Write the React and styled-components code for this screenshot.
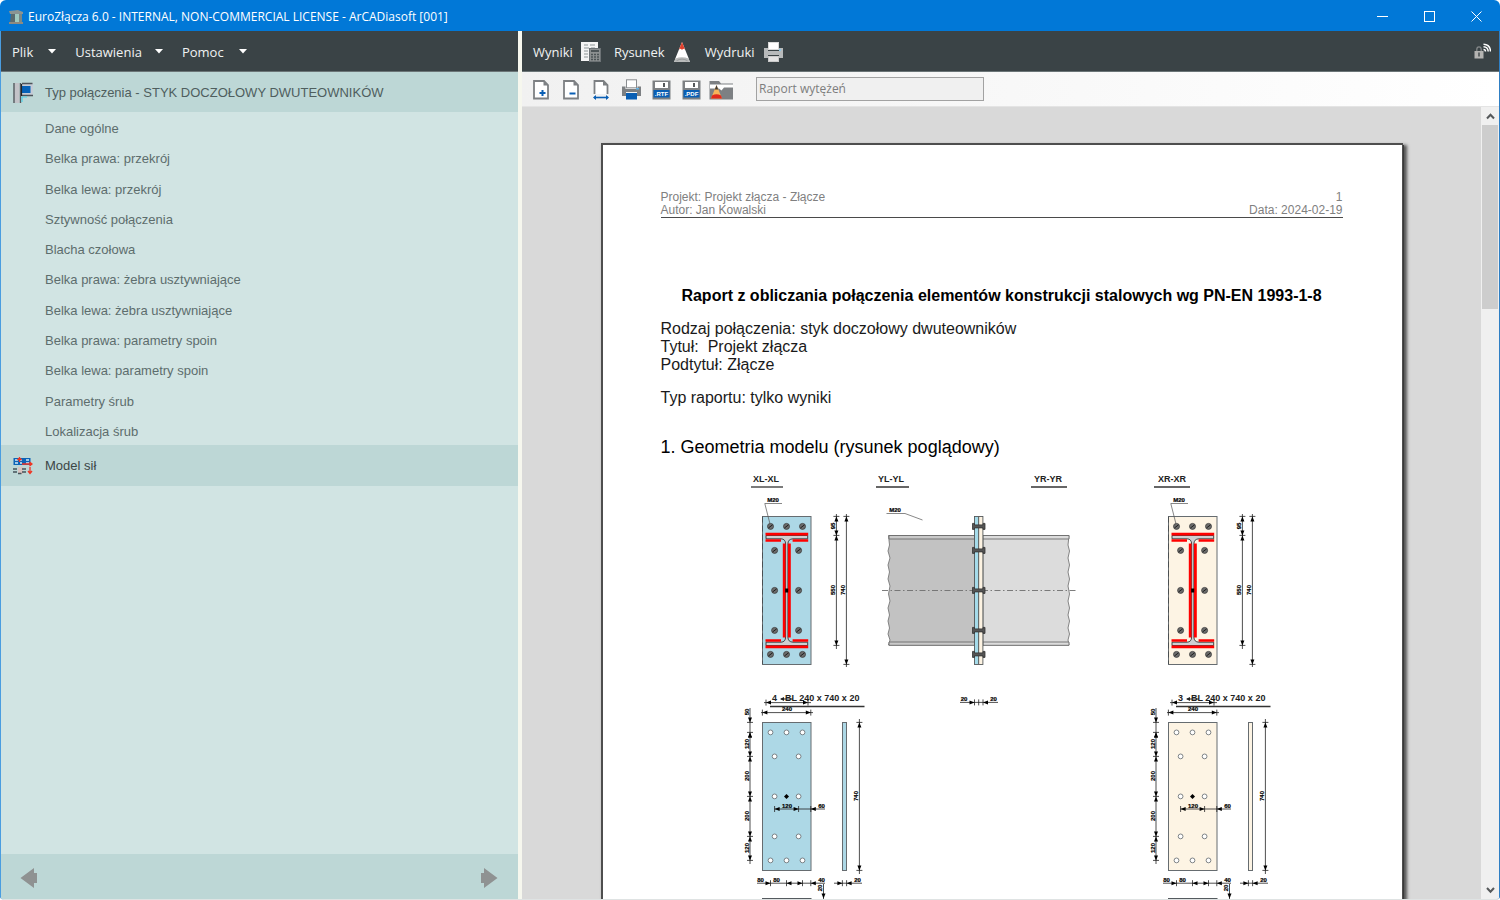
import React from "react";
import styled, { createGlobalStyle } from "styled-components";

const UI = '"Open Sans", "Noto Sans", sans-serif';
const ARIAL = '"Liberation Sans", Arial, sans-serif';

const Global = createGlobalStyle`
  *, *::before, *::after { box-sizing: border-box; }
  html, body, #root { height: 100%; }
  body { margin: 0; background: #ffffff; overflow: hidden; }
  button { border: 0; padding: 0; margin: 0; background: none; color: inherit; font: inherit; }
  svg { display: block; flex: none; }
`;

const Window = styled.div`
  height: 100vh;
  display: flex;
  flex-direction: column;
  overflow: hidden;
  border-radius: 6px 6px 4px 4px;
  border-bottom: 1px solid #dfe3e3;
  background: #0178d7;
`;

const TitleBar = styled.header`
  height: 31px;
  flex: none;
  display: flex;
  align-items: center;
  padding: 2px 0 0 8px;
  color: #ffffff;
  font: 12px/16px ${UI};
`;

const WindowTitle = styled.h1`
  margin: 0 0 0 4px;
  flex: 1;
  font: inherit;
  white-space: nowrap;
`;

const WindowButton = styled.button`
  width: 47px;
  height: 28px;
  display: grid;
  place-items: center;
`;

const Body = styled.div`
  flex: 1;
  min-height: 0;
  display: grid;
  grid-template-columns: minmax(0, 517fr) 4px minmax(0, 977fr);
  padding: 0 1px;
  background: linear-gradient(90deg, #4a9de0 50%, #2f7fc4 50%);
`;

const Divider = styled.div`
  background: #f6f7ee;
`;

const SidePanel = styled.aside`
  display: flex;
  flex-direction: column;
  min-height: 0;
  background: #d1e4e3;
`;

const MenuBar = styled.nav`
  height: 41px;
  flex: none;
  display: flex;
  align-items: center;
  padding: 1px 8px 0 11px;
  background: #3a4346;
  border-bottom: 1px solid #6b7577;
  color: #f0f2f2;
  font: 13px/18px ${UI};
`;

const MenuButton = styled.button`
  display: flex;
  align-items: center;
  gap: ${(p) => p.$gap}px;
  margin-right: ${(p) => p.$after}px;
`;

const MenuSpacer = styled.div`
  flex: 1;
`;

const SectionButton = styled.button`
  height: ${(p) => p.$height}px;
  flex: none;
  display: flex;
  align-items: center;
  gap: 12px;
  padding: 1px 0 0 12px;
  background: #bdd7d6;
  color: ${(p) => p.$color};
  font: 13px/18px ${ARIAL};
  text-align: left;
`;

const StepList = styled.ul`
  height: 333px;
  flex: none;
  margin: 0;
  padding: 0 0 0 44px;
  list-style: none;
  display: grid;
  grid-auto-rows: 1fr;
`;

const StepItem = styled.li`
  display: flex;
  align-items: center;
  padding-top: 4px;
`;

const StepLink = styled.a`
  color: #5d6d6d;
  text-decoration: none;
  font: 13px/18px ${ARIAL};
`;

const PagerBar = styled.footer`
  height: 45px;
  flex: none;
  margin-top: auto;
  display: flex;
  align-items: center;
  justify-content: space-between;
  padding: 2px 20px 0 19px;
  background: #bdd7d6;
`;

const PagerButton = styled.button`
  display: grid;
  place-items: center;
`;

const MainPanel = styled.main`
  display: flex;
  flex-direction: column;
  min-width: 0;
  min-height: 0;
`;

const ToolBar = styled.div`
  height: 35px;
  flex: none;
  display: flex;
  align-items: center;
  padding-left: 4px;
  background: linear-gradient(90deg, #f1f1f1, #ffffff);
  border-bottom: 1px solid #e4e4e4;
`;

const ToolButton = styled.button`
  width: 30px;
  height: 26px;
  flex: none;
  display: grid;
  justify-content: center;
  align-content: center;
  padding-top: 1px;
`;

const ReportName = styled.input`
  width: 228px;
  height: 24px;
  margin-left: 20px;
  padding: 0 2px 2px;
  border: 1px solid #a2a2a2;
  border-radius: 0;
  background: #f0f0f0;
  color: #7d7d7d;
  font: 12px/16px ${UI};
`;

const Viewer = styled.div`
  flex: 1;
  min-height: 0;
  display: flex;
  background: #d9d9d9;
`;

const PageArea = styled.div`
  flex: 1;
  min-width: 0;
  padding-top: 36px;
  overflow: hidden;
`;

const Paper = styled.article`
  width: 802px;
  max-width: 100%;
  margin: 0 auto;
  padding: 46px 59px 60px 58px;
  background: #ffffff;
  border: 2px solid #4e4e4e;
  border-width: 2px 1px 2px 2px;
  box-shadow: 1px 2px 0 #3a3a3a, 3px 3px 3px 1px #555555;
  color: #1a1a1a;
  font: 16px/18px ${ARIAL};
`;

const PaperHeader = styled.header`
  display: flex;
  justify-content: space-between;
  border-bottom: 1px solid #4a4a4a;
  color: #808080;
  font: 12px/13px ${ARIAL};
`;

const HeaderBlock = styled.div`
  text-align: ${(p) => (p.$end ? "right" : "left")};
`;

const ReportTitle = styled.h2`
  margin: 69px 0 15px;
  color: #000000;
  font: bold 16px/18px ${ARIAL};
  text-align: center;
  white-space: nowrap;
`;

const ReportText = styled.p`
  margin: 0 0 15px;
  white-space: pre-wrap;
`;

const ReportHeading = styled.h3`
  margin: 29px 0 8px;
  color: #000000;
  font: 18px/22px ${ARIAL};
`;

const Drawing = styled.svg`
  width: 100%;
  height: auto;
  font-family: ${ARIAL};
  font-weight: bold;
`;

const ScrollBar = styled.div`
  width: 18px;
  flex: none;
  display: flex;
  flex-direction: column;
  padding: 0 1px;
  background: #f0f0f0;
`;

const ScrollButton = styled.button`
  height: 18px;
  flex: none;
  display: grid;
  place-items: center;
`;

const ScrollTrack = styled.div`
  flex: 1;
`;

const ScrollThumb = styled.div`
  height: 24.4%;
  background: #cdcdcd;
`;

/* ---------- icons ---------- */

const AppIcon = () => (
  <svg width="16" height="16" viewBox="0 0 16 16">
    <path d="M1 2 L10 1 L15 3 V5 H2 Z" fill="#8b9492" />
    <path d="M3 5 H7 V14 H2 Z" fill="#5a6b6f" />
    <path d="M7 5 H11 V14 H7 Z" fill="#9fc9bf" />
    <path d="M11 5 H14 V14 H11 Z" fill="#7a8784" />
    <path d="M1 13 H15 V15 H1 Z" fill="#8d8a80" />
  </svg>
);

const Caret = () => (
  <svg width="8" height="5" viewBox="0 0 8 5">
    <path d="M0 0 H8 L4 4.5 Z" fill="#ffffff" />
  </svg>
);

const ResultsIcon = () => (
  <svg width="20" height="20" viewBox="0 0 20 20">
    <rect x="0" y="0" width="17" height="19" fill="#f4f4f4" />
    <path d="M3 3h4M9 3h5M3 6h5M10 6h4M3 9h4M3 12h4M3 15h4" stroke="#8c9496" strokeWidth="1.2" />
    <rect x="8.500" y="6.500" width="11" height="13" fill="#8c9091" stroke="#6c7275" />
    <rect x="10" y="8" width="8" height="2" fill="#4c5457" />
    <path d="M10 12.500h8M10 15h8M10 17.500h8" stroke="#4c5457" strokeWidth="1.400" strokeDasharray="2 1" />
  </svg>
);

const DrawingIcon = () => (
  <svg width="16" height="20" viewBox="0 0 16 20">
    <path d="M8 0 L14.500 16 L15.800 20 H0.200 L1.500 16 Z" fill="#ffffff" />
    <path d="M8 0 L11 7.500 L9.600 6.800 L8 7.800 L6.400 6.800 L5 7.500 Z" fill="#e0402c" />
    <path d="M1.300 16.500 Q8 14 14.700 16.500 L15.800 20 H0.200 Z" fill="#b9bbbb" />
    <path d="M2.500 18.700 Q8 15.500 13.500 18.700" fill="none" stroke="#8e9292" strokeWidth="0.800" />
  </svg>
);

const PrintIcon = () => (
  <svg width="20" height="20" viewBox="0 0 20 20">
    <rect x="4.500" y="0.500" width="10" height="7" fill="#ffffff" stroke="#dadada" />
    <path d="M0 6 H4 V9 H15 V6 H19 V16 H15 V13 H4 V16 H0 Z" fill="#b7babb" />
    <rect x="4.500" y="14.500" width="10" height="5" fill="#e3e3e3" stroke="#c9c9c9" />
    <rect x="15" y="7" width="2" height="2" fill="#8cc7e6" />
  </svg>
);

const LockIcon = () => (
  <svg width="17" height="17" viewBox="0 0 17 17">
    <path d="M2.800 9 V6.500 Q2.800 3.800 5 3.800 Q7.200 3.800 7.200 6.500 V9" fill="none" stroke="#85898a" strokeWidth="1.300" />
    <rect x="0.500" y="8" width="9" height="7.500" fill="#b4b4b2" />
    <path d="M5 9.500 V13.500" stroke="#4d5355" strokeWidth="1.600" />
    <path d="M9.500 6.500 Q11.500 6.500 11.500 8.500 M9.500 3.800 Q14 4 14.200 8.500 M9.500 1.200 Q16.300 1.500 16.500 8.500" fill="none" stroke="#ffffff" strokeWidth="1.500" />
  </svg>
);

const JointIcon = () => (
  <svg width="20" height="22" viewBox="0 0 20 22">
    <rect x="1.500" y="1" width="5" height="20" fill="#c3c3c8" />
    <path d="M1 1 V21 M7.500 1 V21" stroke="#53575c" strokeWidth="1.400" />
    <rect x="9" y="1" width="11" height="12" fill="#c5cbd6" />
    <path d="M9 1.500 H19.500 M9 13.500 H20" stroke="#4e545a" strokeWidth="1.400" />
    <rect x="8.500" y="4" width="9" height="7" fill="#0562b8" />
    <path d="M8.500 2 V14" stroke="#202428" strokeWidth="1.200" />
    <path d="M9 15 H14 M9 15 V20" stroke="#4fd3ea" strokeWidth="1.200" />
  </svg>
);

const ForcesIcon = () => (
  <svg width="20" height="18" viewBox="0 0 20 18">
    <rect x="0.500" y="1" width="17" height="7" fill="#0c63b6" />
    <path d="M2 3 H5 M7 3 H9 M13 3 H16 M2 6 H5 M7 6 H9 M13 6 H16" stroke="#cfeaf7" strokeWidth="1.400" />
    <rect x="5" y="10" width="5" height="7" fill="#d9c3c0" />
    <path d="M0 12 H4 M0 15 H4 M5 16.500 H8.500 M9 12 H13 M9 15 H13" stroke="#46535a" strokeWidth="1.400" />
    <path d="M6.500 0 V5 M4.500 3 L6.500 1 L8.500 3 M9 7 H18 M16.500 5 L19 7 L16.500 9 M17 10 V16 M15 14 L17 16.500 L19 14" fill="none" stroke="#ee3524" strokeWidth="1.300" />
  </svg>
);

const ArrowIcon = ({ back }) => (
  <svg width="18" height="22" viewBox="0 0 18 22">
    <path
      d={back ? "M0.500 11 L14 1 V6 H17 V16 H14 V21 Z" : "M17.500 11 L4 1 V6 H1 V16 H4 V21 Z"}
      fill="#8f9292"
    />
  </svg>
);

const PageShape = () => (
  <path d="M1 1 H11 L15 5 V18.500 H1 Z" fill="#ffffff" stroke="#7d8083" strokeWidth="1.800" />
);

const PageFold = () => <path d="M10.500 1 V5.500 H15 Z" fill="#7d8083" />;

const PagePlusIcon = () => (
  <svg width="16" height="20" viewBox="0 0 16 20">
    <PageShape />
    <PageFold />
    <path d="M6.500 13 H12.500 M9.500 10 V16" stroke="#0a5fb4" strokeWidth="2" />
  </svg>
);

const PageMinusIcon = () => (
  <svg width="16" height="20" viewBox="0 0 16 20">
    <PageShape />
    <PageFold />
    <path d="M6.500 13.500 H12.500" stroke="#0a5fb4" strokeWidth="2" />
  </svg>
);

const PageWidthIcon = () => (
  <svg width="16" height="20" viewBox="0 0 16 20">
    <path d="M1.500 14 V1 H10.500 L14.500 5 V14" fill="#ffffff" stroke="#7d8083" strokeWidth="1.800" />
    <path d="M10 1 V5.500 H15 Z" fill="#7d8083" />
    <path d="M1 17.500 H15" stroke="#0a5fb4" strokeWidth="1.600" />
    <path d="M0 17.500 L3 15 V20 Z M16 17.500 L13 15 V20 Z" fill="#0a5fb4" />
  </svg>
);

const ToolPrintIcon = () => (
  <svg width="19" height="21" viewBox="0 0 19 21">
    <rect x="4.500" y="0.800" width="10" height="8" fill="#ffffff" stroke="#8a8d90" />
    <path d="M0 7.500 H3.500 V10 H15.500 V7.500 H19 V17 H15 V13 H4 V17 H0 Z" fill="#7d8083" />
    <rect x="4" y="14" width="11" height="6.500" fill="#0a5fb4" />
    <rect x="14" y="9" width="3" height="1.500" fill="#63b5e8" />
  </svg>
);

const DiskIcon = ({ label }) => (
  <svg width="19" height="20" viewBox="0 0 19 20">
    <path d="M0.500 0.500 H18.500 V19.500 H0.500 Z" fill="#7d8083" />
    <rect x="3" y="2" width="13" height="6" fill="#ffffff" />
    <rect x="11" y="3" width="2" height="4" fill="#55585a" />
    <rect x="1.500" y="10" width="16" height="7.500" fill="#0a5fb4" />
    <text x="9.500" y="16" textAnchor="middle" fontFamily="Liberation Sans" fontWeight="bold" fontSize="6" fill="#ffffff">
      {label}
    </text>
  </svg>
);

const FolderIcon = () => (
  <svg width="25" height="20" viewBox="0 0 25 20">
    <path d="M0.500 1 H10 L12 3.500 H24 V19.500 H0.500 Z" fill="#7d8083" />
    <path d="M1 4.500 H24 V7.500 H15 L12.500 10.500 L10 8.500 L1 8.500 Z" fill="#ffffff" />
    <path d="M7.500 5 L13 18.500 H2 Z" fill="#f6b45a" />
    <path d="M7.500 5 L9.200 9.500 H5.800 Z" fill="#3e3a36" />
    <path d="M3 15.500 Q7.500 13 12 15.500 L13 18.500 H2 Z" fill="#e02a1c" />
  </svg>
);

const Chevron = ({ down }) => (
  <svg width="9" height="7" viewBox="0 0 9 7">
    <path d={down ? "M1 1 L4.500 4.800 L8 1" : "M1 5.500 L4.500 1.700 L8 5.500"} fill="none" stroke="#55585a" strokeWidth="2" />
  </svg>
);

/* ---------- technical drawing ---------- */

const INK = "#222222";

const Head = ({ x, y, dir }) => {
  const angle = { up: 0, right: 90, down: 180, left: 270 }[dir];
  return <path d="M0 0 L2 5 H-2 Z" fill="#000000" transform={`translate(${x} ${y}) rotate(${angle})`} />;
};

const VDim = ({ x, from, to, ticks, gaps }) => (
  <g>
    <path
      d={`M${x} ${from} V${to} ` + ticks.map((t) => `M${x - 3} ${t} h6`).join(" ")}
      stroke={INK}
      strokeWidth="0.800"
      fill="none"
    />
    {gaps.map(([a, b]) => (
      <g key={a + "-" + b}>
        <Head x={x} y={a} dir="up" />
        <Head x={x} y={b} dir="down" />
      </g>
    ))}
  </g>
);

const HDim = ({ y, from, to, ticks, heads }) => (
  <g>
    <path
      d={`M${from} ${y} H${to} ` + ticks.map((t) => `M${t} ${y - 3} v6`).join(" ")}
      stroke={INK}
      strokeWidth="0.800"
      fill="none"
    />
    {heads.map(([x, dir]) => (
      <Head key={x + dir} x={x} y={y} dir={dir} />
    ))}
  </g>
);

const Dim = ({ x, y, turned, children }) => (
  <text
    fontSize="6"
    textAnchor="middle"
    fill="#000000"
    stroke="#000000"
    strokeWidth="0.200"
    transform={`translate(${x} ${y})${turned ? " rotate(-90)" : ""}`}
  >
    {children}
  </text>
);

const ViewLabel = ({ x, from, to, children }) => (
  <g>
    <text x={x} y="482" fontSize="9" textAnchor="middle" fill="#222222">
      {children}
    </text>
    <path d={`M${from} 487 H${to}`} stroke="#333333" strokeWidth="1.300" />
  </g>
);

const boltSpots = (y) => [
  [770.5, y], [786.5, y], [802.5, y],
  [774.6, y + 24], [798.6, y + 24],
  [774.6, y + 64], [798.6, y + 64],
  [774.6, y + 104], [798.6, y + 104],
  [770.5, y + 128], [786.5, y + 128], [802.5, y + 128],
];

const PlateViews = ({ shift, fill, count }) => (
  <g transform={`translate(${shift} 0)`}>
    <rect x="762.500" y="516.500" width="48.500" height="148" fill={fill} stroke="#666c70" />
    <path d="M762.500 516.500 V664" stroke="#4a4f52" strokeDasharray="6 3" />
    {boltSpots(526.4).map(([x, y]) => (
      <g key={`${x}-${y}`}>
        <circle cx={x} cy={y} r="3" fill="#6c6c6c" stroke="#3c3c3c" strokeWidth="0.800" />
        <path d={`M${x - 2} ${y + 1.5} L${x + 2} ${y - 1.5}`} stroke="#1e1e1e" strokeWidth="1" />
      </g>
    ))}
    <path
      d="M766 535.500 H807.700 V538.800 H793 Q787.900 539 787.900 544 V637 Q787.900 642 793 642.200 H807.700 V645.500 H766 V642.200 H781 Q785.600 642 785.600 637 V544 Q785.600 539 781 538.800 H766 Z"
      fill="#cfcfd2"
      stroke="#333333"
      strokeWidth="0.900"
    />
    <path d="M765.500 532.800 H808.200 V535.600 H765.500 Z M765.500 539.300 H781 V541.800 H765.500 Z M792.600 539.300 H808.200 V541.800 H792.600 Z" fill="#ff0000" />
    <path d="M765.500 645.400 H808.200 V648.200 H765.500 Z M765.500 639.200 H781 V641.700 H765.500 Z M792.600 639.200 H808.200 V641.700 H792.600 Z" fill="#ff0000" />
    <path d="M782.800 543.500 H785.500 V637.500 H782.800 Z M788 543.500 H790.800 V637.500 H788 Z" fill="#ff0000" />
    <rect x="785.200" y="588.500" width="3" height="4" fill="#000000" />

    <Dim x={773} y={502}>M20</Dim>
    <path d="M782 503.500 H764.800 L770 524" fill="none" stroke="#555555" strokeWidth="0.700" />

    <VDim x={836.4} from={514} to={649} ticks={[516.4, 535.4, 645.4]} gaps={[[516.4, 535.4], [535.4, 645.4]]} />
    <VDim x={846.4} from={514} to={667} ticks={[516.4, 664.4]} gaps={[[516.4, 664.4]]} />
    <Dim x={835} y={526} turned>95</Dim>
    <Dim x={835} y={590} turned>550</Dim>
    <Dim x={845} y={590} turned>740</Dim>

    <text x="772" y="701" fontSize="9" fill="#222222">{count}</text>
    <text x="785" y="701" fontSize="9" fill="#222222">BL 240 x 740 x 20</text>
    <path d="M770 706.500 H864.500" stroke="#333333" strokeWidth="1.300" />
    <path d="M781 699 H793" stroke={INK} strokeWidth="1" />
    <path d="M780 699 L784 697 V701 Z" fill={INK} />
    <HDim y={702.6} from={764} to={811} ticks={[766, 808]} heads={[[766, "left"], [808, "right"]]} />
    <HDim y={712.6} from={761} to={813} ticks={[762.4, 810.8]} heads={[[762.4, "left"], [810.8, "right"]]} />
    <Dim x={787} y={711}>240</Dim>

    <rect x="762.500" y="722.500" width="48.500" height="148" fill={fill} stroke="#666c70" />
    {boltSpots(732.4).map(([x, y]) => (
      <circle key={`${x}-${y}`} cx={x} cy={y} r="2.400" fill="#ffffff" stroke="#71767a" strokeWidth="0.900" />
    ))}
    <path d="M786.500 794 L789 796.400 L786.500 799 L784 796.400 Z" fill="#000000" />
    <HDim y={809} from={774.6} to={825} ticks={[774.6, 798.6, 810.8]} heads={[[774.6, "left"], [798.6, "right"], [810.8, "left"]]} />
    <Dim x={787} y={808}>120</Dim>
    <Dim x={821.5} y={808}>60</Dim>

    <VDim
      x={750}
      from={708}
      to={864}
      ticks={[722.4, 732.4, 756.4, 796.4, 836.4, 860.4]}
      gaps={[[732.4, 722.4], [732.4, 756.4], [756.4, 796.4], [796.4, 836.4], [836.4, 860.4]]}
    />
    <Dim x={748.5} y={712} turned>50</Dim>
    <Dim x={748.5} y={744} turned>120</Dim>
    <Dim x={748.5} y={776} turned>200</Dim>
    <Dim x={748.5} y={816} turned>200</Dim>
    <Dim x={748.5} y={848} turned>120</Dim>

    <rect x="842.500" y="722.500" width="4" height="148" fill={fill} stroke="#666c70" />
    <VDim x={859.4} from={719} to={874} ticks={[722.4, 870.4]} gaps={[[722.4, 870.4]]} />
    <Dim x={858} y={796} turned>740</Dim>

    <HDim
      y={883.2}
      from={757}
      to={825}
      ticks={[770.5, 786.5, 802.5, 810.8]}
      heads={[[770.5, "right"], [786.5, "left"], [802.5, "right"], [810.8, "left"]]}
    />
    <Dim x={760.5} y={882}>80</Dim>
    <Dim x={776.5} y={882}>80</Dim>
    <Dim x={821.5} y={882}>40</Dim>
    <HDim y={883.2} from={834} to={862} ticks={[842.4, 846.6]} heads={[[842.4, "right"], [846.6, "left"]]} />
    <Dim x={857.5} y={882}>20</Dim>
    <path d="M823.500 884 V900" stroke={INK} strokeWidth="0.800" />
    <Head x={823.5} y={898.5} dir="down" />
    <Dim x={822} y={888} turned>20</Dim>
    <rect x="762.500" y="898.500" width="48.500" height="4" fill={fill} stroke="#555b5f" />
  </g>
);

const SideView = () => (
  <g>
    <path d="M888.500 535.500 H974.500 V645 H888.500 L890 640 L888 634 L889.500 628 L888 621 L889.500 615 L888 608 L890 601 L888.500 594 L890 586 L888 579 L889.500 572 L888 565 L890 558 L888 551 L889.500 545 Z" fill="#c2c2c2" stroke="#777777" strokeWidth="0.900" />
    <path d="M983 535.500 H1069 L1068 545 L1069.500 551 L1068 558 L1069.500 565 L1068 572 L1069.500 579 L1068 586 L1069.500 594 L1068 601 L1069.500 608 L1068 615 L1069.500 621 L1068 628 L1069.500 634 L1068 640 L1069 645 H983 Z" fill="#dcdcdc" stroke="#777777" strokeWidth="0.900" />
    <path d="M889 535.500 H974.500 V539 H889 Z M889 642 H974.500 V645.300 H889 Z" fill="#c9c9c9" stroke="#6b6b6b" strokeWidth="0.900" />
    <path d="M983 535.500 H1069 V539 H983 Z M983 642 H1069 V645.300 H983 Z" fill="#dcdcdc" stroke="#6b6b6b" strokeWidth="0.900" />
    <path d="M882 590.500 H1076" stroke="#6e6e6e" strokeWidth="0.900" strokeDasharray="6 2.500 1.500 2.500" />
    <rect x="974.500" y="516.500" width="4.200" height="148" fill="#a5dbea" stroke="#55595b" strokeWidth="0.900" />
    <rect x="978.700" y="516.500" width="4.200" height="148" fill="#fdf3e2" stroke="#55595b" strokeWidth="0.900" />
    {[526.4, 550.4, 590.4, 630.4, 654.4].map((y) => (
      <path
        key={y}
        d={`M972.500 ${y - 3} h2 v1.500 h8.500 v-1.500 h2 v6 h-2 v-1.500 h-8.500 v1.500 h-2 Z`}
        fill="#555555"
        stroke="#333333"
        strokeWidth="0.800"
      />
    ))}
    <Dim x={895} y={512}>M20</Dim>
    <path d="M886.500 513.500 H905 L922.500 520" fill="none" stroke="#555555" strokeWidth="0.700" />
    <HDim y={702.4} from={960} to={998} ticks={[974.5, 978.7, 983]} heads={[[974.5, "right"], [983, "left"]]} />
    <Dim x={964} y={701}>20</Dim>
    <Dim x={993.5} y={701}>20</Dim>
  </g>
);

const JointDrawing = () => (
  <Drawing viewBox="661 466 682 440" role="img" aria-label="Geometria modelu">
    <ViewLabel x={766} from={751} to={783}>XL-XL</ViewLabel>
    <ViewLabel x={891} from={876} to={909}>YL-YL</ViewLabel>
    <ViewLabel x={1048} from={1031} to={1067}>YR-YR</ViewLabel>
    <ViewLabel x={1172} from={1154} to={1190}>XR-XR</ViewLabel>
    <PlateViews shift={0} fill="#add8e6" count="4" />
    <SideView />
    <PlateViews shift={406} fill="#fdf4e4" count="3" />
  </Drawing>
);

/* ---------- page ---------- */

const steps = [
  "Dane ogólne",
  "Belka prawa: przekrój",
  "Belka lewa: przekrój",
  "Sztywność połączenia",
  "Blacha czołowa",
  "Belka prawa: żebra usztywniające",
  "Belka lewa: żebra usztywniające",
  "Belka prawa: parametry spoin",
  "Belka lewa: parametry spoin",
  "Parametry śrub",
  "Lokalizacja śrub",
];

const tools = [
  ["Powiększ", <PagePlusIcon />],
  ["Pomniejsz", <PageMinusIcon />],
  ["Szerokość strony", <PageWidthIcon />],
  ["Drukuj", <ToolPrintIcon />],
  ["Zapisz RTF", <DiskIcon label=".RTF" />],
  ["Zapisz PDF", <DiskIcon label=".PDF" />],
  ["Otwórz rysunek", <FolderIcon />],
];

export default function App() {
  return (
    <Window>
      <Global />
      <TitleBar>
        <AppIcon />
        <WindowTitle>EuroZłącza 6.0 - INTERNAL, NON-COMMERCIAL LICENSE - ArCADiasoft [001]</WindowTitle>
        <WindowButton aria-label="Minimalizuj">
          <svg width="11" height="11"><path d="M0 5.500 H11" stroke="#ffffff" /></svg>
        </WindowButton>
        <WindowButton aria-label="Maksymalizuj">
          <svg width="11" height="11"><rect x="0.500" y="0.500" width="10" height="10" fill="none" stroke="#ffffff" /></svg>
        </WindowButton>
        <WindowButton aria-label="Zamknij">
          <svg width="11" height="11"><path d="M0.500 0.500 L10.500 10.500 M10.500 0.500 L0.500 10.500" stroke="#ffffff" /></svg>
        </WindowButton>
      </TitleBar>
      <Body>
        <SidePanel>
          <MenuBar>
            <MenuButton $gap={15} $after={19}>Plik<Caret /></MenuButton>
            <MenuButton $gap={13} $after={19}>Ustawienia<Caret /></MenuButton>
            <MenuButton $gap={15} $after={0}>Pomoc<Caret /></MenuButton>
          </MenuBar>
          <SectionButton $height={40} $color="#4f5e5e">
            <JointIcon />
            Typ połączenia - STYK DOCZOŁOWY DWUTEOWNIKÓW
          </SectionButton>
          <StepList>
            {steps.map((step) => (
              <StepItem key={step}>
                <StepLink href="#">{step}</StepLink>
              </StepItem>
            ))}
          </StepList>
          <SectionButton $height={41} $color="#3c4646">
            <ForcesIcon />
            Model sił
          </SectionButton>
          <PagerBar>
            <PagerButton aria-label="Wstecz"><ArrowIcon back /></PagerButton>
            <PagerButton aria-label="Dalej"><ArrowIcon /></PagerButton>
          </PagerBar>
        </SidePanel>
        <Divider />
        <MainPanel>
          <MenuBar>
            <MenuButton $gap={8} $after={13}>Wyniki<ResultsIcon /></MenuButton>
            <MenuButton $gap={9} $after={15}>Rysunek<DrawingIcon /></MenuButton>
            <MenuButton $gap={9} $after={0}>Wydruki<PrintIcon /></MenuButton>
            <MenuSpacer />
            <button aria-label="Licencja"><LockIcon /></button>
          </MenuBar>
          <ToolBar>
            {tools.map(([name, icon]) => (
              <ToolButton key={name} aria-label={name}>{icon}</ToolButton>
            ))}
            <ReportName aria-label="Nazwa raportu" defaultValue="Raport wytężeń" />
          </ToolBar>
          <Viewer>
            <PageArea>
              <Paper>
                <PaperHeader>
                  <HeaderBlock>Projekt: Projekt złącza - Złącze<br />Autor: Jan Kowalski</HeaderBlock>
                  <HeaderBlock $end>1<br />Data: 2024-02-19</HeaderBlock>
                </PaperHeader>
                <ReportTitle>Raport z obliczania połączenia elementów konstrukcji stalowych wg PN-EN 1993-1-8</ReportTitle>
                <ReportText>{"Rodzaj połączenia: styk doczołowy dwuteowników\nTytuł:  Projekt złącza\nPodtytuł: Złącze"}</ReportText>
                <ReportText>Typ raportu: tylko wyniki</ReportText>
                <ReportHeading>1. Geometria modelu (rysunek poglądowy)</ReportHeading>
                <JointDrawing />
              </Paper>
            </PageArea>
            <ScrollBar>
              <ScrollButton aria-label="W górę"><Chevron /></ScrollButton>
              <ScrollTrack><ScrollThumb /></ScrollTrack>
              <ScrollButton aria-label="W dół"><Chevron down /></ScrollButton>
            </ScrollBar>
          </Viewer>
        </MainPanel>
      </Body>
    </Window>
  );
}
